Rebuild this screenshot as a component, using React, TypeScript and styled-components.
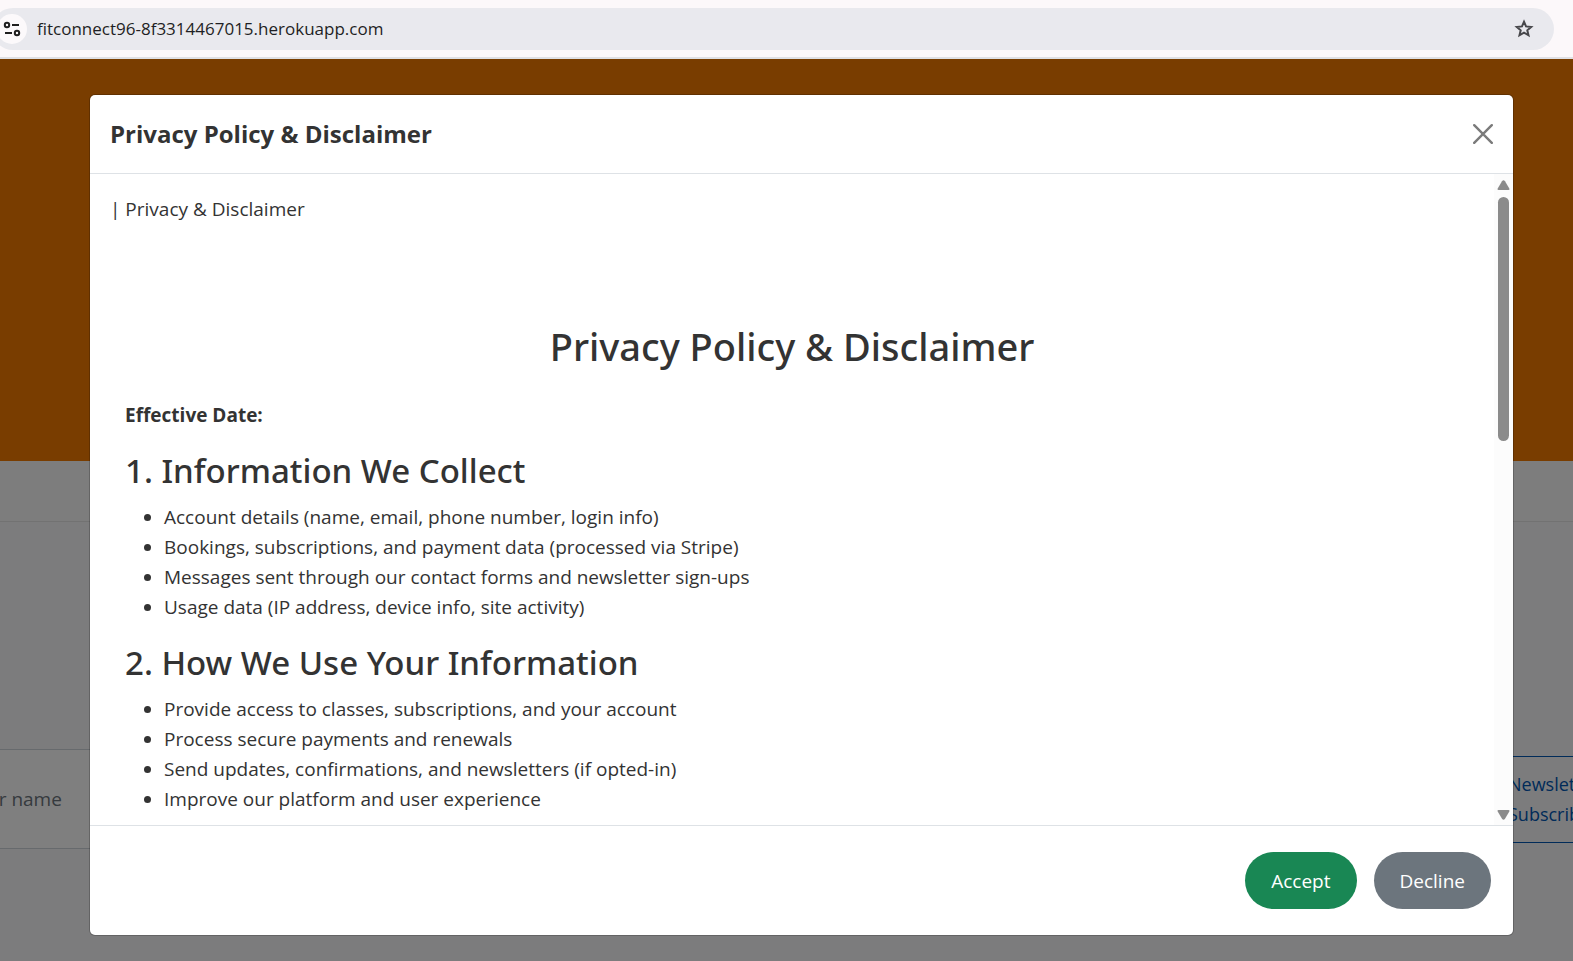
import React from "react";
import styled, { createGlobalStyle } from "styled-components";

const GlobalStyle = createGlobalStyle`
  *, *::before, *::after { box-sizing: border-box; }
  body {
    margin: 0;
    overflow: hidden;
    font-family: "Open Sans", "Noto Sans", sans-serif;
    font-size: 19px;
    line-height: 30px;
    color: #333;
  }
  h1, h2, h3, p, ul { margin: 0; }
  button, input { font: inherit; }
`;

const Window = styled.div`
  display: flex;
  flex-direction: column;
  height: 100vh;
  overflow: hidden;
`;

const BrowserBar = styled.header`
  flex: none;
  padding: 8px 19px 7px 0;
  background: #fcf8fa;
  border-bottom: 2px solid #dfe0e5;
`;

const AddressBar = styled.div`
  display: flex;
  align-items: center;
  gap: 10px;
  height: 42px;
  margin-left: -8px;
  padding: 0 20px 0 5px;
  border-radius: 21px;
  background: #e9e9ee;
`;

const SiteInfoButton = styled.button`
  display: grid;
  place-items: center;
  flex: none;
  width: 30px;
  height: 30px;
  padding: 0;
  border: 0;
  border-radius: 50%;
  background: #fcf9fb;
`;

const AddressInput = styled.input`
  flex: 1;
  min-width: 0;
  padding: 0;
  border: 0;
  outline: 0;
  background: transparent;
  color: #1f1f24;
  font-size: 17px;
`;

const IconButton = styled.button`
  display: grid;
  place-items: center;
  flex: none;
  padding: 0;
  border: 0;
  background: transparent;
`;

const Page = styled.div`
  position: relative;
  flex: 1;
  min-height: 0;
  display: flex;
  flex-direction: column;
  background: #f8f9fa;
`;

const Hero = styled.section`
  flex: none;
  height: 402px;
  background: #f37b00;
`;

const NavStrip = styled.nav`
  flex: none;
  height: 61px;
  background: #fbfbfb;
  border-bottom: 1px solid #e4e4e4;
`;

const SignupForm = styled.form`
  display: flex;
  justify-content: space-between;
  align-items: center;
  margin: 227px -60px 0 -60px;
`;

const NameInput = styled.input`
  width: 400px;
  height: 100px;
  padding: 0 24px;
  border: 1px solid #ced4da;
  background: #fff;
  color: #333;
  &::placeholder { color: #6c757d; opacity: 1; }
`;

const SubscribeButton = styled.button`
  display: flex;
  flex-direction: column;
  justify-content: center;
  width: 160px;
  height: 87px;
  padding: 0 34px;
  border: 1px solid #0056b3;
  background: transparent;
  color: #0056b3;
  font-size: 18px;
  text-align: left;
`;

const Backdrop = styled.div`
  position: absolute;
  inset: 0;
  display: flex;
  padding: 36px 60px 26px 90px;
  background: rgba(0, 0, 0, 0.5);
`;

const Dialog = styled.section`
  flex: 1;
  min-width: 0;
  display: flex;
  flex-direction: column;
  border-radius: 5px;
  background: #fff;
  box-shadow: 0 0 0 1px rgba(0, 0, 0, 0.2);
  overflow: hidden;
`;

const DialogHeader = styled.header`
  flex: none;
  display: flex;
  align-items: center;
  justify-content: space-between;
  height: 79px;
  padding: 0 20px;
  border-bottom: 1px solid #dee2e6;
`;

const DialogTitle = styled.h3`
  font-size: 24px;
  line-height: 36px;
  font-weight: 700;
`;

const DialogBody = styled.div`
  flex: 1;
  min-height: 0;
  display: flex;
`;

const Scroller = styled.div`
  flex: 1;
  min-width: 0;
  overflow: hidden;
  padding: 20px;
`;

const Policy = styled.article`
  padding: 98px 15px 0;
`;

const PolicyTitle = styled.h1`
  margin-bottom: 30px;
  font-family: "Noto Sans", "Open Sans", sans-serif;
  font-size: 38px;
  line-height: 48px;
  font-weight: 500;
  text-align: center;
`;

const SectionTitle = styled.h2`
  margin: 20px 0 10px;
  font-family: "Noto Sans", "Open Sans", sans-serif;
  font-size: 33px;
  line-height: 42px;
  font-weight: 500;
`;

const BulletList = styled.ul`
  padding-left: 39px;
`;

const ScrollTrack = styled.div`
  flex: none;
  display: flex;
  flex-direction: column;
  align-items: center;
  width: 19px;
  padding: 6px 0 5px;
  background: #fcfcfc;
`;

const ScrollThumb = styled.div`
  width: 11px;
  height: 244px;
  margin: 7px 0 auto;
  border-radius: 6px;
  background: #8b8b8b;
`;

const DialogFooter = styled.footer`
  flex: none;
  display: flex;
  align-items: center;
  justify-content: flex-end;
  gap: 17px;
  height: 110px;
  padding: 0 22px;
  border-top: 1px solid #dee2e6;
`;

const PillButton = styled.button<{ $color: string }>`
  height: 57px;
  padding: 0 26px;
  border: 0;
  border-radius: 29px;
  background: ${(p) => p.$color};
  color: #fff;
`;

const SECTIONS = [
  {
    title: "1. Information We Collect",
    items: [
      "Account details (name, email, phone number, login info)",
      "Bookings, subscriptions, and payment data (processed via Stripe)",
      "Messages sent through our contact forms and newsletter sign-ups",
      "Usage data (IP address, device info, site activity)",
    ],
  },
  {
    title: "2. How We Use Your Information",
    items: [
      "Provide access to classes, subscriptions, and your account",
      "Process secure payments and renewals",
      "Send updates, confirmations, and newsletters (if opted-in)",
      "Improve our platform and user experience",
    ],
  },
];

const TuneIcon = () => (
  <svg width="18" height="18" viewBox="0 0 18 18" fill="none" stroke="#1f1f1f" strokeWidth="2">
    <circle cx="4" cy="5" r="2.2" />
    <path d="M9 5h7M2 13h7" />
    <circle cx="14" cy="13" r="2.2" />
  </svg>
);

const StarIcon = () => (
  <svg width="20" height="20" viewBox="0 0 20 20" fill="none" stroke="#47474b" strokeWidth="2">
    <path d="M10 2.700L12 7.400L17.200 7.900L13.300 11.300L14.500 16.300L10 13.700L5.500 16.300L6.700 11.300L2.800 7.900L8 7.400Z" />
  </svg>
);

const CloseIcon = () => (
  <svg width="20" height="20" viewBox="0 0 20 20" fill="none" stroke="#7b7b7b" strokeWidth="2.400" strokeLinecap="round">
    <path d="M1.200 1.200l17.600 17.600M18.800 1.200L1.200 18.800" />
  </svg>
);

const ScrollArrow = ({ down = false }: { down?: boolean }) => (
  <svg width="13" height="10" viewBox="0 0 13 10" fill="#8b8b8b">
    <path
      d={
        down
          ? "M1.500 0h10q1.500 0 .8 1.500L8 8.800q-1.500 1.800-3 0L.7 1.500Q0 0 1.500 0z"
          : "M1.500 10h10q1.500 0 .8-1.500L8 1.200q-1.500-1.800-3 0L.7 8.500Q0 10 1.500 10z"
      }
    />
  </svg>
);

export default function App() {
  return (
    <>
      <GlobalStyle />
      <Window>
        <BrowserBar>
          <AddressBar>
            <SiteInfoButton aria-label="View site information">
              <TuneIcon />
            </SiteInfoButton>
            <AddressInput aria-label="Address" defaultValue="fitconnect96-8f3314467015.herokuapp.com" />
            <IconButton aria-label="Bookmark this page">
              <StarIcon />
            </IconButton>
          </AddressBar>
        </BrowserBar>
        <Page>
          <Hero />
          <NavStrip />
          <SignupForm>
            <NameInput aria-label="Your name" placeholder="Your name" />
            <SubscribeButton type="button">
              <span>Newsletter</span>
              <span>Subscribe</span>
            </SubscribeButton>
          </SignupForm>
          <Backdrop>
            <Dialog role="dialog" aria-modal="true" aria-labelledby="policy-dialog-title">
              <DialogHeader>
                <DialogTitle id="policy-dialog-title">Privacy Policy &amp; Disclaimer</DialogTitle>
                <IconButton aria-label="Close">
                  <CloseIcon />
                </IconButton>
              </DialogHeader>
              <DialogBody>
                <Scroller>
                  <p>| Privacy &amp; Disclaimer</p>
                  <Policy>
                    <PolicyTitle>Privacy Policy &amp; Disclaimer</PolicyTitle>
                    <p>
                      <strong>Effective Date:</strong>
                    </p>
                    {SECTIONS.map((section) => (
                      <React.Fragment key={section.title}>
                        <SectionTitle>{section.title}</SectionTitle>
                        <BulletList>
                          {section.items.map((item) => (
                            <li key={item}>{item}</li>
                          ))}
                        </BulletList>
                      </React.Fragment>
                    ))}
                  </Policy>
                </Scroller>
                <ScrollTrack aria-hidden="true">
                  <ScrollArrow />
                  <ScrollThumb />
                  <ScrollArrow down />
                </ScrollTrack>
              </DialogBody>
              <DialogFooter>
                <PillButton $color="#198754">Accept</PillButton>
                <PillButton $color="#6c757d">Decline</PillButton>
              </DialogFooter>
            </Dialog>
          </Backdrop>
        </Page>
      </Window>
    </>
  );
}
